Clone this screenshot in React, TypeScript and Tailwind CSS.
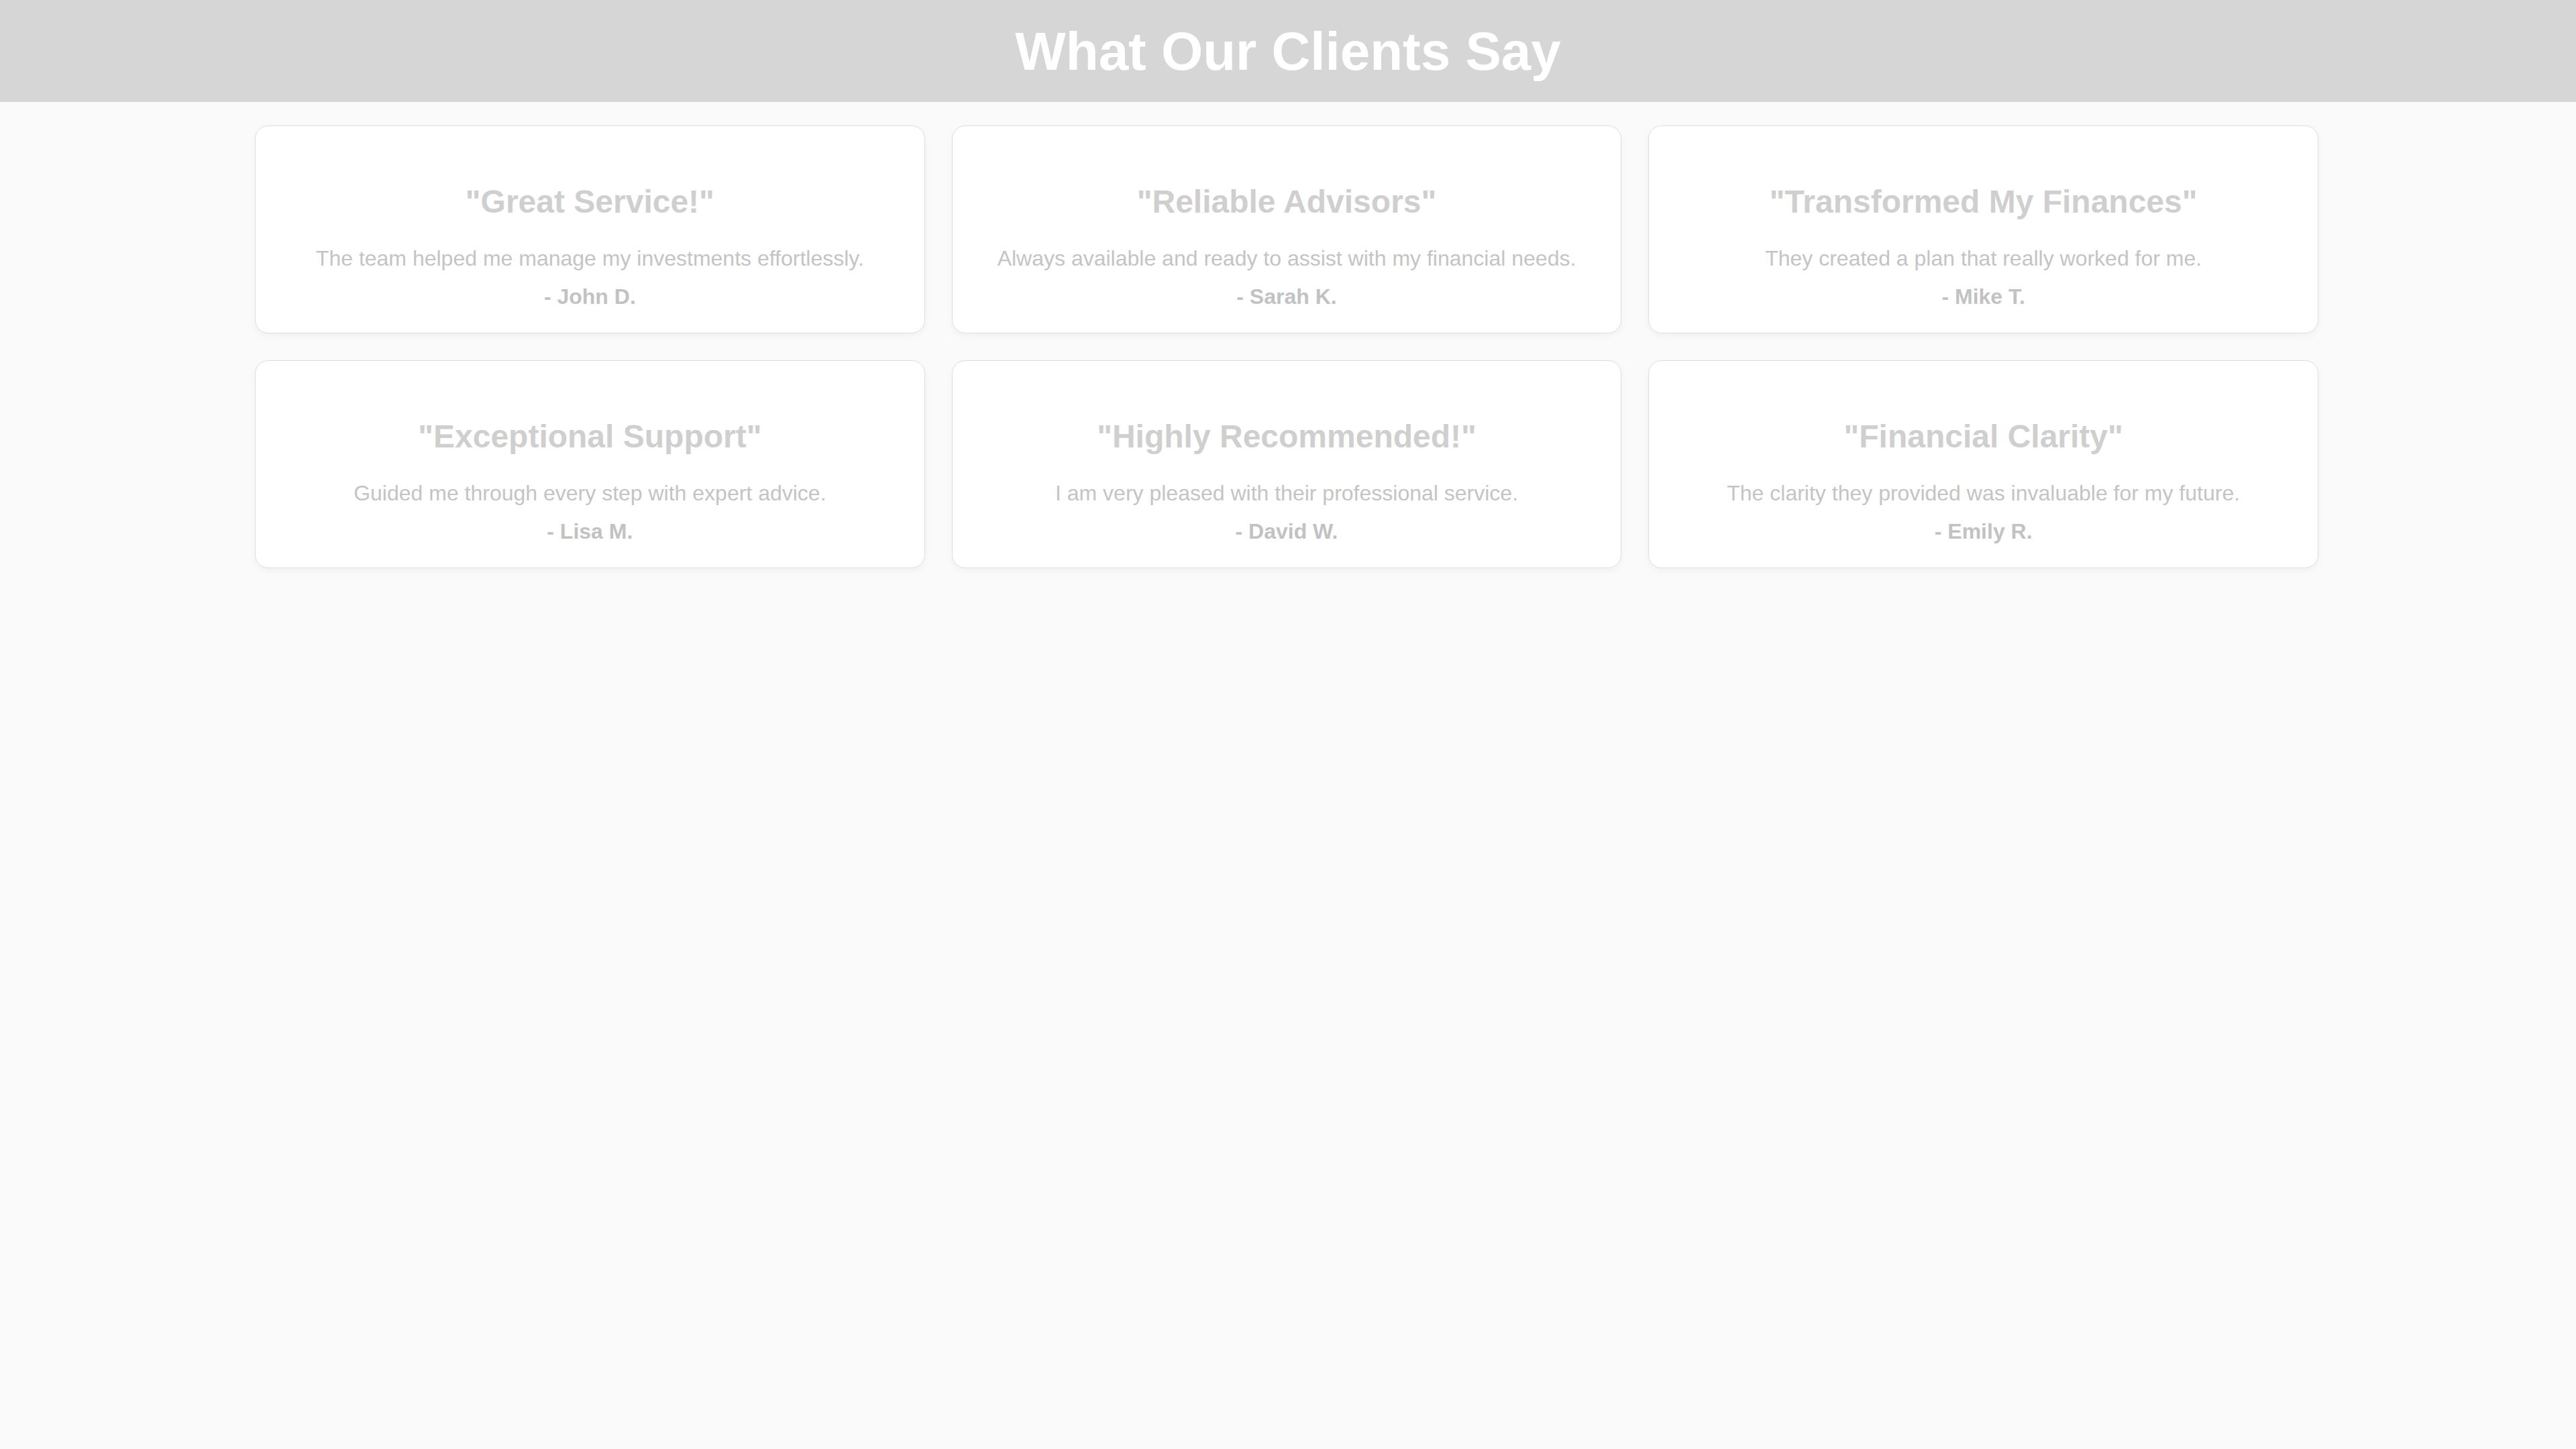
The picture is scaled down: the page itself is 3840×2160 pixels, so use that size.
import React from "react";

interface Testimonial {
  title: string;
  quote: string;
  author: string;
}

const testimonials: Testimonial[] = [
  {
    title: "Great Service!",
    quote: "The team helped me manage my investments effortlessly.",
    author: "John D.",
  },
  {
    title: "Reliable Advisors",
    quote: "Always available and ready to assist with my financial needs.",
    author: "Sarah K.",
  },
  {
    title: "Transformed My Finances",
    quote: "They created a plan that really worked for me.",
    author: "Mike T.",
  },
  {
    title: "Exceptional Support",
    quote: "Guided me through every step with expert advice.",
    author: "Lisa M.",
  },
  {
    title: "Highly Recommended!",
    quote: "I am very pleased with their professional service.",
    author: "David W.",
  },
  {
    title: "Financial Clarity",
    quote: "The clarity they provided was invaluable for my future.",
    author: "Emily R.",
  },
];

function TestimonialCard({ item }: { item: Testimonial }) {
  return (
    <div className="bg-white border border-[#dedede] rounded-[20px] shadow-[0_4px_12px_rgba(0,0,0,0.04)] pt-[85px] pb-[35px] px-10 flex flex-col items-center text-center">
      <h3 className="text-[48px] leading-[55px] font-bold text-[#cfcfcf] mb-[39px]">
        "{item.title}"
      </h3>
      <p className="text-[32px] leading-[37px] text-[#c4c4c4] mb-[20px]">
        {item.quote}
      </p>
      <p className="text-[32px] leading-[37px] font-bold text-[#c2c2c2]">
        - {item.author}
      </p>
    </div>
  );
}

export default function App() {
  return (
    <div className="min-h-screen w-full bg-[#fafafa] font-['Liberation_Sans',Arial,sans-serif]">
      {/* Header */}
      <header className="h-[152px] bg-[#d6d6d6] pt-[31px] text-center">
        <h1 className="text-[80px] leading-[92px] font-bold text-white">
          What Our Clients Say
        </h1>
      </header>

      {/* Testimonials grid */}
      <section className="w-[3076px] mx-auto pt-[35px] pr-[4px] box-content grid grid-cols-3 gap-x-[40px] gap-y-[40px]">
        {testimonials.map((t) => (
          <TestimonialCard key={t.author} item={t} />
        ))}
      </section>
    </div>
  );
}
